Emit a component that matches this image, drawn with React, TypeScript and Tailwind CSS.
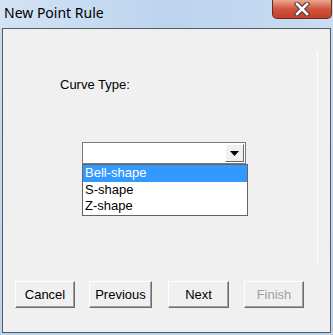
import React from "react";

function CloseX() {
  return (
    <svg width="18" height="14" viewBox="0 0 18 14">
      <path d="M4 2 L14 12 M14 2 L4 12" stroke="#4a3a3a" strokeWidth="4.6" strokeLinecap="square" />
      <path d="M4 2 L14 12 M14 2 L4 12" stroke="#ffffff" strokeWidth="2.6" strokeLinecap="square" />
    </svg>
  );
}

function Btn({ label, disabled, w }: { label: string; disabled?: boolean; w: string }) {
  return (
    <div
      className={`${w} h-[27px] flex items-center justify-center bg-[#f0f0f0] border border-t-white border-l-white border-r-[#6d6d6d] border-b-[#6d6d6d] shadow-[inset_-1px_-1px_0_#a0a0a0] text-[13px] ${
        disabled ? "text-[#a0a0a0]" : "text-black"
      }`}
    >
      {label}
    </div>
  );
}

export default function App() {
  return (
    <div
      className="w-[333px] h-[335px] overflow-hidden bg-gradient-to-b from-[#c9ddf2] to-[#bcd3ec] flex flex-col"
      style={{ fontFamily: '"Liberation Sans", Arial, sans-serif' }}
    >
      {/* title bar */}
      <div className="h-[28px] flex items-start shrink-0 bg-gradient-to-r from-[#d3e3f4] via-[#bcd4ee] to-[#c8dcf2]">
        <div
          className="pl-[4px] pt-[4px] text-[14px] leading-[18px] text-black"
          style={{ fontFamily: '"Noto Sans", "Open Sans", sans-serif' }}
        >
          New Point Rule
        </div>
        <div className="ml-auto w-[60px] h-[19px] rounded-b-[5px] border border-t-0 border-[#6b2a20] bg-gradient-to-b from-[#e9a792] via-[#d2533c] to-[#c2402a] flex items-center justify-center mr-[1px]">
          <CloseX />
        </div>
      </div>
      {/* client */}
      <div className="ml-[2px] w-[329px] h-[305px] border border-[#555a60] bg-[#f0f0f0] flex">
        <div className="flex-1 flex flex-col">
          <div className="pl-[57px] mt-[48px] text-[13px] leading-[15px] text-black">Curve Type:</div>
          <div className="ml-[79px] mt-[50px] w-[166px]">
            <div className="w-[164px] h-[22px] bg-white border border-[#7a7a7a] flex justify-end items-stretch p-px">
              <div className="w-[19px] bg-[#f0f0f0] border border-t-white border-l-white border-r-[#696969] border-b-[#696969] flex items-center justify-center">
                <svg width="9" height="5" viewBox="0 0 9 5">
                  <path d="M0 0 H9 L4.5 5 Z" fill="#000" />
                </svg>
              </div>
            </div>
            <div className="w-[166px] h-[52px] bg-white border border-[#646464] text-[13px] leading-[16.5px] text-black">
              <div className="bg-[#3399ff] text-white pl-[2px]">Bell-shape</div>
              <div className="pl-[2px]">S-shape</div>
              <div className="pl-[2px]">Z-shape</div>
            </div>
          </div>
          <div className="mt-auto mb-[24px] flex pl-[12px]">
            <Btn label="Cancel" w="w-[60px]" />
            <div className="w-[14px]" />
            <Btn label="Previous" w="w-[63px]" />
            <div className="w-[16px]" />
            <Btn label="Next" w="w-[61px]" />
            <div className="w-[15px]" />
            <Btn label="Finish" disabled w="w-[60px]" />
          </div>
        </div>
        <div className="w-px bg-white mt-[22px] h-[212px] mr-[12px]" />
      </div>
    </div>
  );
}
